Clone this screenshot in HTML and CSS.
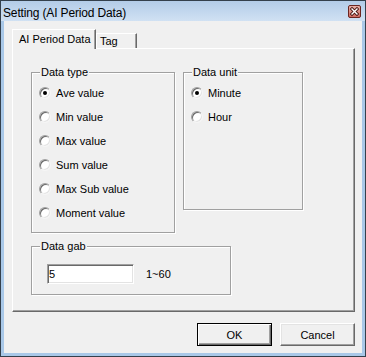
FILE: index.html
```html
<!DOCTYPE html>
<html>
<head>
<meta charset="utf-8">
<link rel="stylesheet" href="styles.css">
</head>
<body>
<div class="window">
  <div class="titlebar">
    <span class="title">Setting (AI Period Data)</span>
    <span class="close">
      <svg width="13" height="13" viewBox="0 0 13 13">
        <defs>
          <linearGradient id="cg" x1="0" y1="0" x2="0" y2="1">
            <stop offset="0" stop-color="#eab4ac"/>
            <stop offset="1" stop-color="#cf6a5f"/>
          </linearGradient>
        </defs>
        <rect x="0.5" y="0.5" width="12" height="12" rx="1.5" fill="url(#cg)" stroke="#6b2520"/>
        <path d="M4 4 L9 9 M9 4 L4 9" stroke="#4a1612" stroke-width="3.2" stroke-linecap="square"/>
        <path d="M4 4 L9 9 M9 4 L4 9" stroke="#ffffff" stroke-width="1.4" stroke-linecap="square"/>
      </svg>
    </span>
  </div>
  <div class="client">
    <div class="tabs">
      <div class="tab active">AI Period Data</div>
      <div class="tab">Tag</div>
    </div>
    <div class="panel">
      <div class="row-top">
        <fieldset class="group type">
          <legend>Data type</legend>
          <div class="opts">
            <div class="opt"><span class="radio checked"></span>Ave value</div>
            <div class="opt"><span class="radio"></span>Min value</div>
            <div class="opt"><span class="radio"></span>Max value</div>
            <div class="opt"><span class="radio"></span>Sum value</div>
            <div class="opt"><span class="radio"></span>Max Sub value</div>
            <div class="opt"><span class="radio"></span>Moment value</div>
          </div>
        </fieldset>
        <fieldset class="group unit">
          <legend>Data unit</legend>
          <div class="opts">
            <div class="opt"><span class="radio checked"></span>Minute</div>
            <div class="opt"><span class="radio"></span>Hour</div>
          </div>
        </fieldset>
      </div>
      <fieldset class="group gab">
        <legend>Data gab</legend>
        <div class="gab-row">
          <input class="field" type="text" value="5">
          <span class="range">1~60</span>
        </div>
      </fieldset>
    </div>
    <div class="buttons">
      <button class="btn default">OK</button>
      <button class="btn">Cancel</button>
    </div>
  </div>
</div>
</body>
</html>
```

FILE: styles.css
```css
* { box-sizing: border-box; }
html, body { margin: 0; padding: 0; }
body {
  width: 366px;
  height: 357px;
  overflow: hidden;
  font-family: "Liberation Sans", Arial, sans-serif;
  font-size: 11px;
  color: #000;
}
.window {
  width: 366px;
  height: 357px;
  border: 1px solid #34404c;
  background: #a9c8e8;
  display: flex;
  flex-direction: column;
}
.titlebar {
  height: 20px;
  flex: none;
  display: flex;
  justify-content: space-between;
  align-items: flex-start;
  padding: 0 4px 0 2px;
  background: linear-gradient(#b3cce8, #d0e1f3);
}
.title {
  font-size: 12px;
  line-height: 14px;
  margin-top: 5px;
  letter-spacing: -0.15px;
}
.close {
  display: block;
  width: 13px;
  height: 13px;
  margin-top: 4px;
}
.close svg { display: block; }
.client {
  flex: 1;
  margin: 0 3px 3px 3px;
  background: #f0f0f0;
  padding: 8px 7px 0 8px;
  display: flex;
  flex-direction: column;
}
.tabs {
  display: flex;
  align-items: flex-end;
  height: 19px;
}
.tab {
  background: #f0f0f0;
  border-top: 1px solid #fff;
  border-left: 1px solid #fff;
  border-right: 1px solid #696969;
  box-shadow: inset -1px 0 0 #a0a0a0;
  line-height: 13px;
  white-space: nowrap;
  overflow: hidden;
}
.tab.active {
  width: 84px;
  height: 20px;
  margin-bottom: -1px;
  padding: 3px 0 0 6px;
  position: relative;
  z-index: 1;
}
.tab:not(.active) {
  width: 41px;
  height: 15px;
  padding: 1px 0 0 3px;
}
.panel {
  width: 343px;
  height: 264px;
  border-top: 1px solid #fff;
  border-left: 1px solid #fff;
  border-right: 1px solid #696969;
  border-bottom: 1px solid #696969;
  box-shadow: inset -1px -1px 0 #a0a0a0;
  padding: 17px 0 0 18px;
  display: flex;
  flex-direction: column;
  align-items: flex-start;
}
.row-top {
  display: flex;
  align-items: flex-start;
  gap: 8px;
}
.group {
  margin: 0;
  padding: 0;
  border: 1px solid #a0a0a0;
  box-shadow: 1px 1px 0 #fff, inset 1px 1px 0 #fff;
  min-width: 0;
}
.group legend {
  margin-left: 8px;
  padding: 0 1px;
  line-height: 12px;
  background: #f0f0f0;
}
.type { width: 144px; height: 167px; }
.unit { width: 120px; height: 144px; }
.gab { width: 200px; height: 55px; margin-top: 7px; }
.opts {
  padding: 3px 0 0 7px;
}
.opt {
  height: 24px;
  display: flex;
  align-items: center;
  white-space: nowrap;
}
.radio {
  width: 12px;
  height: 12px;
  margin-right: 5px;
  border-radius: 50%;
  background: #fff;
  border: 1px solid;
  border-color: #a0a0a0 #f4f4f4 #f4f4f4 #a0a0a0;
  box-shadow: inset 1px 1px 0 #696969, inset -1px -1px 0 #e3e3e3;
  position: relative;
  flex: none;
}
.radio.checked::after {
  content: "";
  position: absolute;
  left: 3px;
  top: 3px;
  width: 4px;
  height: 4px;
  border-radius: 50%;
  background: #000;
}
.gab-row {
  display: flex;
  align-items: center;
  padding: 12px 0 0 15px;
}
.field {
  width: 87px;
  height: 20px;
  margin: 0;
  padding: 0 0 0 1px;
  font-family: inherit;
  font-size: 11px;
  color: #000;
  background: #fff;
  border: 1px solid;
  border-color: #a0a0a0 #fff #fff #a0a0a0;
  box-shadow: inset 1px 1px 0 #696969, inset -1px -1px 0 #e3e3e3;
  outline: none;
}
.range {
  margin-left: 12px;
}
.buttons {
  display: flex;
  justify-content: flex-end;
  gap: 8px;
  margin-top: 11px;
}
.btn {
  width: 75px;
  height: 23px;
  margin: 0;
  padding: 0;
  font-family: inherit;
  font-size: 11px;
  color: #000;
  background: #f0f0f0;
  border: 1px solid;
  border-color: #fff #696969 #696969 #fff;
  box-shadow: inset -1px -1px 0 #a0a0a0, inset 1px 1px 0 #e3e3e3;
}
.btn.default {
  border-color: #000;
  box-shadow: inset 1px 1px 0 #fff, inset -1px -1px 0 #696969, inset -2px -2px 0 #a0a0a0;
}
```
